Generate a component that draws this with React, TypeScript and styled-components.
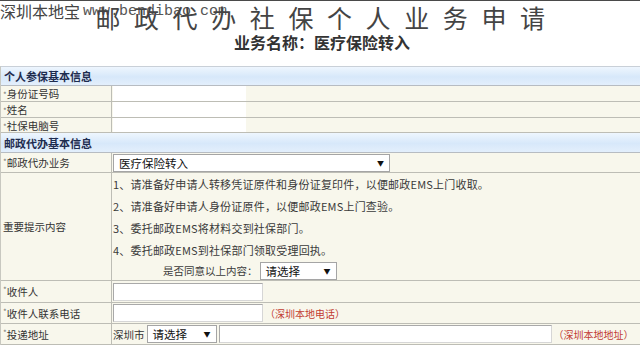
import React from "react";
import styled, { createGlobalStyle } from "styled-components";

const GlobalStyle = createGlobalStyle`
  html, body {
    margin: 0;
    padding: 0;
    background: #fff;
  }
  body {
    font-family: "Noto Sans CJK SC", "Noto Sans", sans-serif;
  }
`;

const Page = styled.div`
  width: 640px;
  height: 352px;
  border-top: 1px solid #4a4a4a;
  box-sizing: border-box;
  overflow: hidden;
`;

const Masthead = styled.header`
  position: relative;
  height: 65px;
  display: flex;
  flex-direction: column;
  align-items: center;
`;

const Watermark = styled.div`
  position: absolute;
  left: 0;
  top: 1px;
  display: flex;
  align-items: center;
  gap: 3px;
  height: 19px;
  white-space: nowrap;
`;

const SiteName = styled.span`
  font-size: 16px;
  line-height: 19px;
  color: #444;
`;

const SiteUrl = styled.span`
  font-family: "Liberation Mono", monospace;
  font-size: 15px;
  line-height: 19px;
  color: #555;
`;

const Title = styled.h1`
  position: relative;
  z-index: 1;
  margin: 4px 0 0;
  padding-left: 14px;
  font-size: 25px;
  font-weight: 400;
  line-height: 25px;
  letter-spacing: 13.6px;
  color: #444;
  white-space: nowrap;
`;

const SubTitle = styled.h2`
  margin: 3px 0 0;
  padding-left: 4px;
  font-size: 16px;
  font-weight: bold;
  line-height: 18px;
  color: #333;
`;

const Form = styled.div`
  display: grid;
  grid-template-columns: 111px 1fr;
  border-top: 1px solid #c9d0d8;
  border-left: 1px solid #c8c8c0;
  font-size: 10.5px;
  color: #333;
`;

const SectionHead = styled.div<{ $h: number }>`
  grid-column: 1 / -1;
  box-sizing: border-box;
  height: ${(p) => p.$h}px;
  display: flex;
  align-items: center;
  padding-left: 3px;
  background: linear-gradient(#eef6fe, #d7e8fa 55%, #e3effc);
  border-bottom: 1px solid #b7bcc2;
  font-size: 11px;
  font-weight: bold;
  color: #1e2c4f;
`;

const Label = styled.div<{ $h: number }>`
  box-sizing: border-box;
  height: ${(p) => p.$h}px;
  display: flex;
  align-items: center;
  padding-left: 2px;
  background: #f8f7ec;
  border-bottom: 1px solid #bdbdb5;
  border-right: 1px solid #bdbdb5;
  white-space: nowrap;
`;

const Star = styled.span`
  font-size: 8px;
  color: #777;
  align-self: flex-start;
  margin-top: 3px;
`;

const Field = styled.div<{ $h: number }>`
  box-sizing: border-box;
  height: ${(p) => p.$h}px;
  display: flex;
  align-items: center;
  gap: 2px;
  padding-left: 1px;
  background: #f8f7ec;
  border-bottom: 1px solid #bdbdb5;
  white-space: nowrap;
`;

const Blank = styled.div`
  width: 133px;
  align-self: stretch;
  background: #fff;
`;

const TextBox = styled.input<{ $w: number }>`
  box-sizing: border-box;
  width: ${(p) => p.$w}px;
  height: 18px;
  margin: 0;
  padding: 0 3px;
  border: 1px solid #a9a9a9;
  border-right-color: #d6d6d6;
  border-bottom-color: #d6d6d6;
  background: #fff;
  font: inherit;
`;

const Select = styled.div<{ $w: number }>`
  box-sizing: border-box;
  width: ${(p) => p.$w}px;
  height: 18px;
  display: flex;
  align-items: center;
  justify-content: space-between;
  padding: 0 5px;
  border: 1px solid #a5a5a5;
  background: #fff;
  font-size: 11.5px;
  color: #111;
`;

const Arrow = styled.span`
  font-size: 7px;
  color: #111;
`;

const Note = styled.span`
  color: #c23b32;
  font-size: 10px;
`;

const City = styled.span`
  color: #333;
`;

const Tips = styled.div`
  box-sizing: border-box;
  height: 108px;
  display: flex;
  flex-direction: column;
  padding-left: 1px;
  background: #f8f7ec;
  border-bottom: 1px solid #bdbdb5;
  white-space: nowrap;
  color: #3a3a3a;
`;

const TipLine = styled.div`
  height: 22px;
  line-height: 22px;
  font-size: 11px;
  letter-spacing: 0.2px;
`;

const Agree = styled.div`
  display: flex;
  align-items: center;
  gap: 2px;
  height: 21px;
  padding-left: 50px;
`;

const tips = [
  "1、请准备好申请人转移凭证原件和身份证复印件，以便邮政EMS上门收取。",
  "2、请准备好申请人身份证原件，以便邮政EMS上门查验。",
  "3、委托邮政EMS将材料交到社保部门。",
  "4、委托邮政EMS到社保部门领取受理回执。",
];

const Req = ({ children }: { children: React.ReactNode }) => (
  <>
    <Star>*</Star>
    {children}
  </>
);

export default function App() {
  return (
    <>
      <GlobalStyle />
      <Page>
        <Masthead>
          <Watermark>
            <SiteName>深圳本地宝</SiteName>
            <SiteUrl>www.bendibao.com</SiteUrl>
          </Watermark>
          <Title>邮政代办社保个人业务申请</Title>
          <SubTitle>业务名称：医疗保险转入</SubTitle>
        </Masthead>

        <Form>
          <SectionHead $h={19}>个人参保基本信息</SectionHead>
          <Label $h={16}><Req>身份证号码</Req></Label>
          <Field $h={16}><Blank /></Field>
          <Label $h={16}><Req>姓名</Req></Label>
          <Field $h={16}><Blank /></Field>
          <Label $h={15}><Req>社保电脑号</Req></Label>
          <Field $h={15}><Blank /></Field>

          <SectionHead $h={20}>邮政代办基本信息</SectionHead>
          <Label $h={20}><Req>邮政代办业务</Req></Label>
          <Field $h={20}>
            <Select $w={277}>
              <span>医疗保险转入</span>
              <Arrow>▼</Arrow>
            </Select>
          </Field>

          <Label $h={108}>重要提示内容</Label>
          <Tips>
            {tips.map((t) => (
              <TipLine key={t}>{t}</TipLine>
            ))}
            <Agree>
              是否同意以上内容：
              <Select $w={77}>
                <span>请选择</span>
                <Arrow>▼</Arrow>
              </Select>
            </Agree>
          </Tips>

          <Label $h={22}><Req>收件人</Req></Label>
          <Field $h={22}>
            <TextBox $w={150} readOnly />
          </Field>
          <Label $h={21}><Req>收件人联系电话</Req></Label>
          <Field $h={21}>
            <TextBox $w={150} readOnly />
            <Note>（深圳本地电话）</Note>
          </Field>
          <Label $h={21}><Req>投递地址</Req></Label>
          <Field $h={21}>
            <City>深圳市</City>
            <Select $w={70}>
              <span>请选择</span>
              <Arrow>▼</Arrow>
            </Select>
            <TextBox $w={333} readOnly />
            <Note>（深圳本地地址）</Note>
          </Field>
        </Form>
      </Page>
    </>
  );
}
